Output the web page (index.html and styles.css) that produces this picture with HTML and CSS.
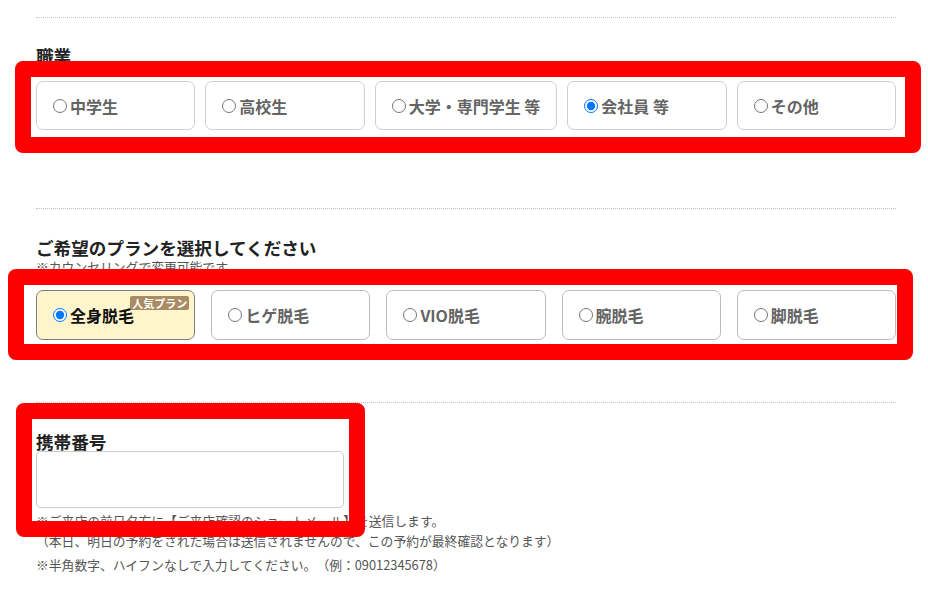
FILE: index.html
```html
<!DOCTYPE html>
<html lang="ja">
<head>
<meta charset="utf-8">
<title>予約フォーム</title>
<link rel="stylesheet" href="styles.css">
</head>
<body>
<div class="page">
  <section class="section sec-job">
    <h2 class="label">職業</h2>
    <div class="choices choices-job">
      <label class="choice"><input type="radio" name="job"><span>中学生</span></label>
      <label class="choice"><input type="radio" name="job"><span>高校生</span></label>
      <label class="choice"><input type="radio" name="job"><span>大学・専門学生 等</span></label>
      <label class="choice"><input type="radio" name="job" checked><span>会社員 等</span></label>
      <label class="choice"><input type="radio" name="job"><span>その他</span></label>
    </div>
  </section>

  <section class="section sec-plan">
    <h2 class="label">ご希望のプランを選択してください</h2>
    <p class="sub">※カウンセリングで変更可能です</p>
    <div class="choices choices-plan">
      <label class="choice plan selected"><input type="radio" name="plan" checked><span>全身脱毛</span><em class="badge">人気プラン</em></label>
      <label class="choice plan"><input type="radio" name="plan"><span>ヒゲ脱毛</span></label>
      <label class="choice plan"><input type="radio" name="plan"><span>VIO脱毛</span></label>
      <label class="choice plan"><input type="radio" name="plan"><span>腕脱毛</span></label>
      <label class="choice plan"><input type="radio" name="plan"><span>脚脱毛</span></label>
    </div>
  </section>

  <section class="section sec-tel">
    <h2 class="label">携帯番号</h2>
    <input class="tel" type="tel">
    <p class="note">※ご来店の前日夕方に【ご来店確認のショートメール】を送信します。<br>（本日、明日の予約をされた場合は送信されませんので、この予約が最終確認となります）</p>
    <p class="note note-last">※半角数字、ハイフンなしで入力してください。（例：09012345678）</p>
  </section>

  <div class="mark mark-1"></div>
  <div class="mark mark-2"></div>
  <div class="mark mark-3"></div>
</div>
</body>
</html>
```

FILE: styles.css
```css
html, body {
  margin: 0;
  padding: 0;
  background: #fff;
}

body {
  font-family: "Noto Sans CJK JP", "Noto Sans", sans-serif;
  color: #222;
  text-spacing-trim: space-all;
}

.page {
  position: relative;
  padding: 17px 32px 0 36px;
  width: 860px;
  height: 573px;
  overflow: hidden;
}

.section {
  border-top: 1px dotted #c4c4c4;
}

.label {
  margin: 0;
  font-size: 17.6px;
  font-weight: 700;
  line-height: 1.2;
  color: #222;
}

.sec-job {
  padding-top: 27px;
  padding-bottom: 78px;
}

.sec-job .choices {
  margin-top: 15px;
}

.sec-plan {
  padding-top: 29px;
  padding-bottom: 62px;
}

.sec-plan .label {
  line-height: 20px;
}

.sub {
  margin: 1px 0 0;
  font-size: 12.8px;
  line-height: 15px;
  color: #555;
}

.sec-plan .choices {
  margin-top: 16px;
}

.sec-tel {
  padding-top: 30px;
}

.sec-tel .label {
  line-height: 1;
}

.choices {
  display: flex;
}

.choices-job {
  gap: 10px;
}

.choices-plan {
  gap: 16px;
}

.choice {
  position: relative;
  flex: 1 1 0;
  display: flex;
  align-items: center;
  height: 49px;
  box-sizing: border-box;
  padding: 0 16px 0 11px;
  border: 1px solid #cfcfcf;
  border-radius: 7px;
  background: #fff;
  white-space: nowrap;
  font-size: 16px;
  font-weight: 700;
  color: #646464;
}

.choice input {
  margin: 0 3px 0 5px;
  width: 14px;
  height: 14px;
}

.plan {
  height: 50px;
  border-color: #bcbcbc;
}

.plan.selected {
  background: #fff5cc;
  border-color: #7c7c7c;
  color: #111;
}

.badge {
  position: absolute;
  top: 5px;
  right: 5px;
  padding: 0 2px;
  height: 14px;
  line-height: 14px;
  font-size: 11px;
  font-style: normal;
  font-weight: 700;
  color: #fff;
  background: #a98b63;
  border-radius: 2px;
}

.tel {
  display: block;
  margin: 0;
  width: 308px;
  height: 57px;
  box-sizing: border-box;
  border: 1px solid #cacaca;
  border-radius: 5px;
  background: #fff;
}

.note {
  margin: 3px 0 0;
  font-size: 12.8px;
  line-height: 1.6;
  color: #555;
}

.note-last {
  margin-top: 3px;
}

.mark {
  position: absolute;
  box-sizing: border-box;
  border: 16px solid #ff0000;
  border-radius: 8px;
}

.mark-1 {
  left: 15px;
  top: 61px;
  width: 906px;
  height: 92px;
}

.mark-2 {
  left: 8px;
  top: 269px;
  width: 905px;
  height: 91px;
}

.mark-3 {
  left: 16px;
  top: 403px;
  width: 349px;
  height: 134px;
}
```
